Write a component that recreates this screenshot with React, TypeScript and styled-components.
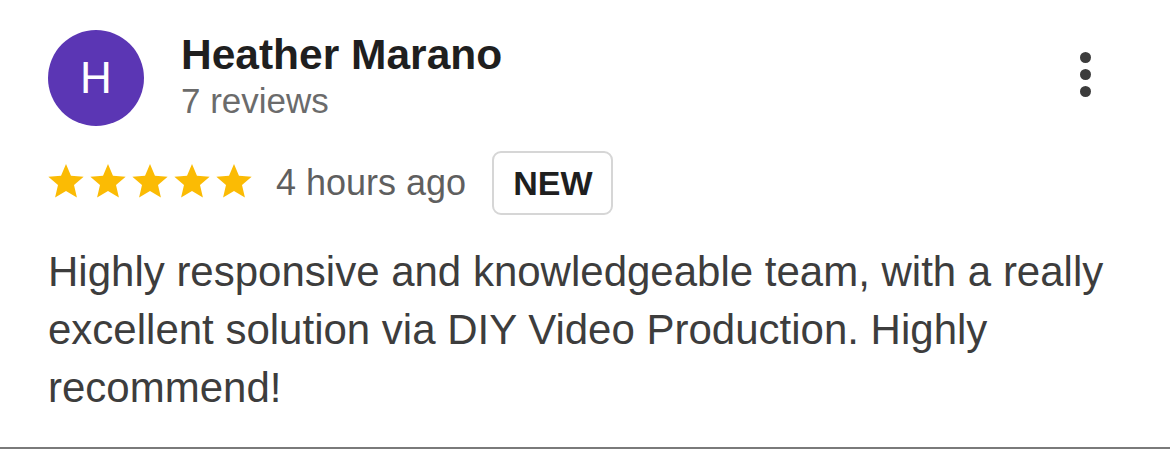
import React from 'react';
import styled, { createGlobalStyle } from 'styled-components';

const GlobalStyle = createGlobalStyle`
  html, body {
    margin: 0;
    padding: 0;
    background: #ffffff;
  }
  body {
    font-family: 'Liberation Sans', Arial, Helvetica, sans-serif;
  }
`;

const Card = styled.article`
  box-sizing: border-box;
  width: 1170px;
  height: 449px;
  padding: 30px 48px 0 48px;
  background: #fff;
  border-bottom: 2px solid #7a7a7a;
`;

const Header = styled.div`
  display: flex;
  align-items: flex-start;
`;

const Avatar = styled.div<{ $bg: string }>`
  width: 96px;
  height: 96px;
  border-radius: 50%;
  background: ${(p) => p.$bg};
  color: #fff;
  display: flex;
  align-items: center;
  justify-content: center;
  font-size: 44px;
  font-weight: 400;
  flex-shrink: 0;
`;

const Who = styled.div`
  margin-left: 37px;
  display: flex;
  flex-direction: column;
  flex: 1;
`;

const Name = styled.div`
  font-size: 42.5px;
  line-height: 50px;
  font-weight: 700;
  color: #1f1f1f;
`;

const Count = styled.div`
  font-size: 35px;
  line-height: 42px;
  color: #6b6b6b;
`;

const Kebab = styled.button`
  display: flex;
  flex-direction: column;
  gap: 6px;
  margin: 22px 31px 0 0;
  padding: 0;
  border: 0;
  background: none;
  cursor: pointer;
`;

const Dot = styled.span`
  width: 11px;
  height: 11px;
  border-radius: 50%;
  background: #3c3c3c;
`;

const Meta = styled.div`
  display: flex;
  align-items: center;
  margin-top: 25px;
`;

const Stars = styled.div`
  display: flex;
  gap: 6px;
  margin-top: -4px;
`;

const StarIcon = styled.svg`
  width: 36px;
  height: 34px;
  fill: #fbbb04;
  display: block;
`;

const When = styled.span`
  font-size: 36px;
  color: #5f5f5f;
  margin-left: 24px;
`;

const Badge = styled.span`
  box-sizing: border-box;
  height: 64px;
  margin-left: 26px;
  padding: 0 19px;
  display: flex;
  align-items: center;
  border: 2px solid #d6d6d6;
  border-radius: 9px;
  font-size: 34px;
  font-weight: 700;
  color: #1f1f1f;
`;

const Body = styled.p`
  margin: 28px 0 0 0;
  font-size: 42px;
  line-height: 58px;
  color: #3d3d3d;
`;

const Star = () => (
  <StarIcon viewBox="2 2 20 19.27">
    <path d="M12 17.27L18.18 21l-1.64-7.03L22 9.24l-7.19-.61L12 2 9.19 8.63 2 9.24l5.46 4.730L5.82 21z" />
  </StarIcon>
);

export default function App() {
  return (
    <>
      <GlobalStyle />
      <Card>
        <Header>
          <Avatar $bg="#5b36b4">H</Avatar>
          <Who>
            <Name>Heather Marano</Name>
            <Count>7 reviews</Count>
          </Who>
          <Kebab aria-label="More options">
            <Dot />
            <Dot />
            <Dot />
          </Kebab>
        </Header>
        <Meta>
          <Stars>
            {[0, 1, 2, 3, 4].map((i) => (
              <Star key={i} />
            ))}
          </Stars>
          <When>4 hours ago</When>
          <Badge>NEW</Badge>
        </Meta>
        <Body>
          Highly responsive and knowledgeable team, with a really excellent solution via DIY Video
          Production. Highly recommend!
        </Body>
      </Card>
    </>
  );
}
